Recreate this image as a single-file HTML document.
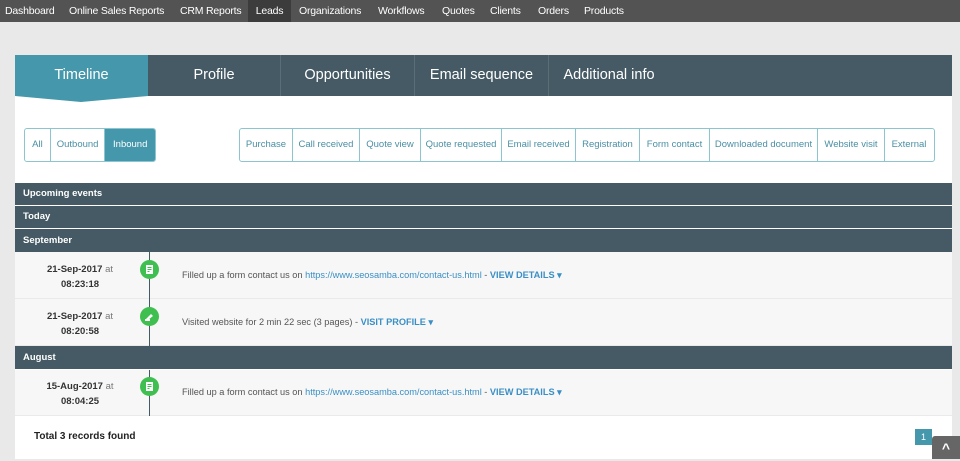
<!DOCTYPE html>
<html><head><style>
*{margin:0;padding:0;box-sizing:border-box}
body{width:960px;height:459px;background:#e9e9e9;font-family:"Liberation Sans",sans-serif;position:relative;overflow:hidden}
.nav{position:absolute;top:0;left:0;width:960px;height:22px;background:#535353;}
.nav span{position:absolute;top:0;height:22px;line-height:22px;color:#fff;font-size:10.5px;letter-spacing:-0.2px}
.panel{position:absolute;left:15px;top:55px;width:937px;height:404px;background:#fff}
.tabs{position:absolute;left:0;top:0;width:937px;height:41px;background:#455a64}
.tab{position:absolute;top:0;height:41px;line-height:41px;color:#fff;font-size:14.5px;text-align:center;border-right:1px solid #5a6e78}
.abs{position:absolute}
.grp{position:absolute;top:73px;height:34px;border:1px solid #8cc4d0;border-radius:3px;display:flex;overflow:hidden}
.grp div{height:32px;line-height:32px;font-size:9.5px;color:#4a8fa5;text-align:center;border-right:1px solid #8cc4d0}
.grp div:last-child{border-right:none}
.sec{position:absolute;left:0;width:937px;background:#455a64;color:#fff;font-size:9.5px;font-weight:bold;padding-left:8px}
.row{position:absolute;left:0;width:937px;background:#f7f7f7;border-bottom:1px solid #eaeaea}
.date{position:absolute;left:0;width:130px;text-align:center;font-size:9.5px;color:#333;line-height:15px}
.date b{color:#333}.date i{font-style:normal;color:#777}
.txt{position:absolute;left:167px;font-size:9.2px;color:#555}
.txt a{color:#3a8fc5;text-decoration:none}.txt b{color:#3a8fc5}
.ic{position:absolute;left:125px;width:19px;height:19px;border-radius:50%;background:#3fbf4f}
</style></head><body>
<div class="nav">
<span style="left:5px">Dashboard</span><span style="left:69px">Online Sales Reports</span><span style="left:180px">CRM Reports</span>
<span style="left:248px;width:43px;background:#3c3c3c;text-align:center">Leads</span>
<span style="left:299px">Organizations</span><span style="left:378px">Workflows</span><span style="left:442px">Quotes</span><span style="left:490px">Clients</span><span style="left:538px">Orders</span><span style="left:584px">Products</span>
</div>
<div class="panel">
<div class="tabs">
<div class="tab" style="left:0;width:133px;background:#4598ab;border:none">Timeline</div>
<div class="tab" style="left:133px;width:133px">Profile</div>
<div class="tab" style="left:266px;width:134px">Opportunities</div>
<div class="tab" style="left:400px;width:134px">Email sequence</div>
<div class="tab" style="left:534px;width:120px;border:none">Additional info</div>
</div>
<svg class="abs" style="left:0;top:41px" width="133" height="7"><polygon points="0,0 133,0 66,6" fill="#4598ab"/></svg>
<div class="grp" style="left:9px;width:132px"><div style="width:26px">All</div><div style="width:55px">Outbound</div><div style="width:50px;background:#4598ab;color:#fff">Inbound</div></div>
<div class="grp" style="left:224px;width:696px">
<div style="width:53px">Purchase</div><div style="width:67px">Call received</div><div style="width:61px">Quote view</div><div style="width:81px">Quote requested</div><div style="width:74px">Email received</div><div style="width:64px">Registration</div><div style="width:70px">Form contact</div><div style="width:108px">Downloaded document</div><div style="width:67px">Website visit</div><div style="width:48px">External</div></div>
<div class="sec" style="top:128px;height:22px;line-height:22px">Upcoming events</div>
<div class="sec" style="top:151px;height:22px;line-height:22px">Today</div>
<div class="sec" style="top:174px;height:23px;line-height:23px">September</div>
<div class="row" style="top:197px;height:47px"></div>
<div class="row" style="top:244px;height:47px"></div>
<div class="sec" style="top:291px;height:23px;line-height:23px">August</div>
<div class="row" style="top:315px;height:46px"></div>
<div class="abs" style="left:134px;top:197px;width:1px;height:94px;background:#455a64"></div>
<div class="abs" style="left:134px;top:315px;width:1px;height:46px;background:#455a64"></div>
<div class="ic" style="top:205px"><svg width="19" height="19"><rect x="6" y="5" width="7" height="9" fill="#fff"/><path d="M7.5 7.5h4M7.5 9.5h4M7.5 11.5h2" stroke="#3fbf4f" stroke-width="1"/></svg></div>
<div class="ic" style="top:252px"><svg width="19" height="19"><path d="M6 12l5-5 2 2-5 4z" fill="#fff"/><path d="M5 13h5" stroke="#fff" stroke-width="2"/></svg></div>
<div class="ic" style="top:322px"><svg width="19" height="19"><rect x="6" y="5" width="7" height="9" fill="#fff"/><path d="M7.5 7.5h4M7.5 9.5h4M7.5 11.5h2" stroke="#3fbf4f" stroke-width="1"/></svg></div>
<div class="date" style="top:207px"><b>21-Sep-2017</b> <i>at</i><br><b>08:23:18</b></div>
<div class="date" style="top:254px"><b>21-Sep-2017</b> <i>at</i><br><b>08:20:58</b></div>
<div class="date" style="top:324px"><b>15-Aug-2017</b> <i>at</i><br><b>08:04:25</b></div>
<div class="txt" style="top:215px">Filled up a form contact us on <a>https://www.seosamba.com/contact-us.html</a> - <b>VIEW DETAILS ▾</b></div>
<div class="txt" style="top:262px">Visited website for 2 min 22 sec (3 pages) - <b>VISIT PROFILE ▾</b></div>
<div class="txt" style="top:332px">Filled up a form contact us on <a>https://www.seosamba.com/contact-us.html</a> - <b>VIEW DETAILS ▾</b></div>
<div class="abs" style="left:19px;top:376px;font-size:10px;font-weight:bold;color:#222">Total 3 records found</div>
<div class="abs" style="left:900px;top:374px;width:17px;height:16px;background:#4598ab;color:#fff;font-size:9px;text-align:center;line-height:16px">1</div>
</div>
<div class="abs" style="left:932px;top:436px;width:28px;height:23px;background:#666;border-radius:3px 0 0 0;color:#fff;text-align:center;font-size:14px;font-weight:bold;line-height:25px">^</div>
</body></html>
